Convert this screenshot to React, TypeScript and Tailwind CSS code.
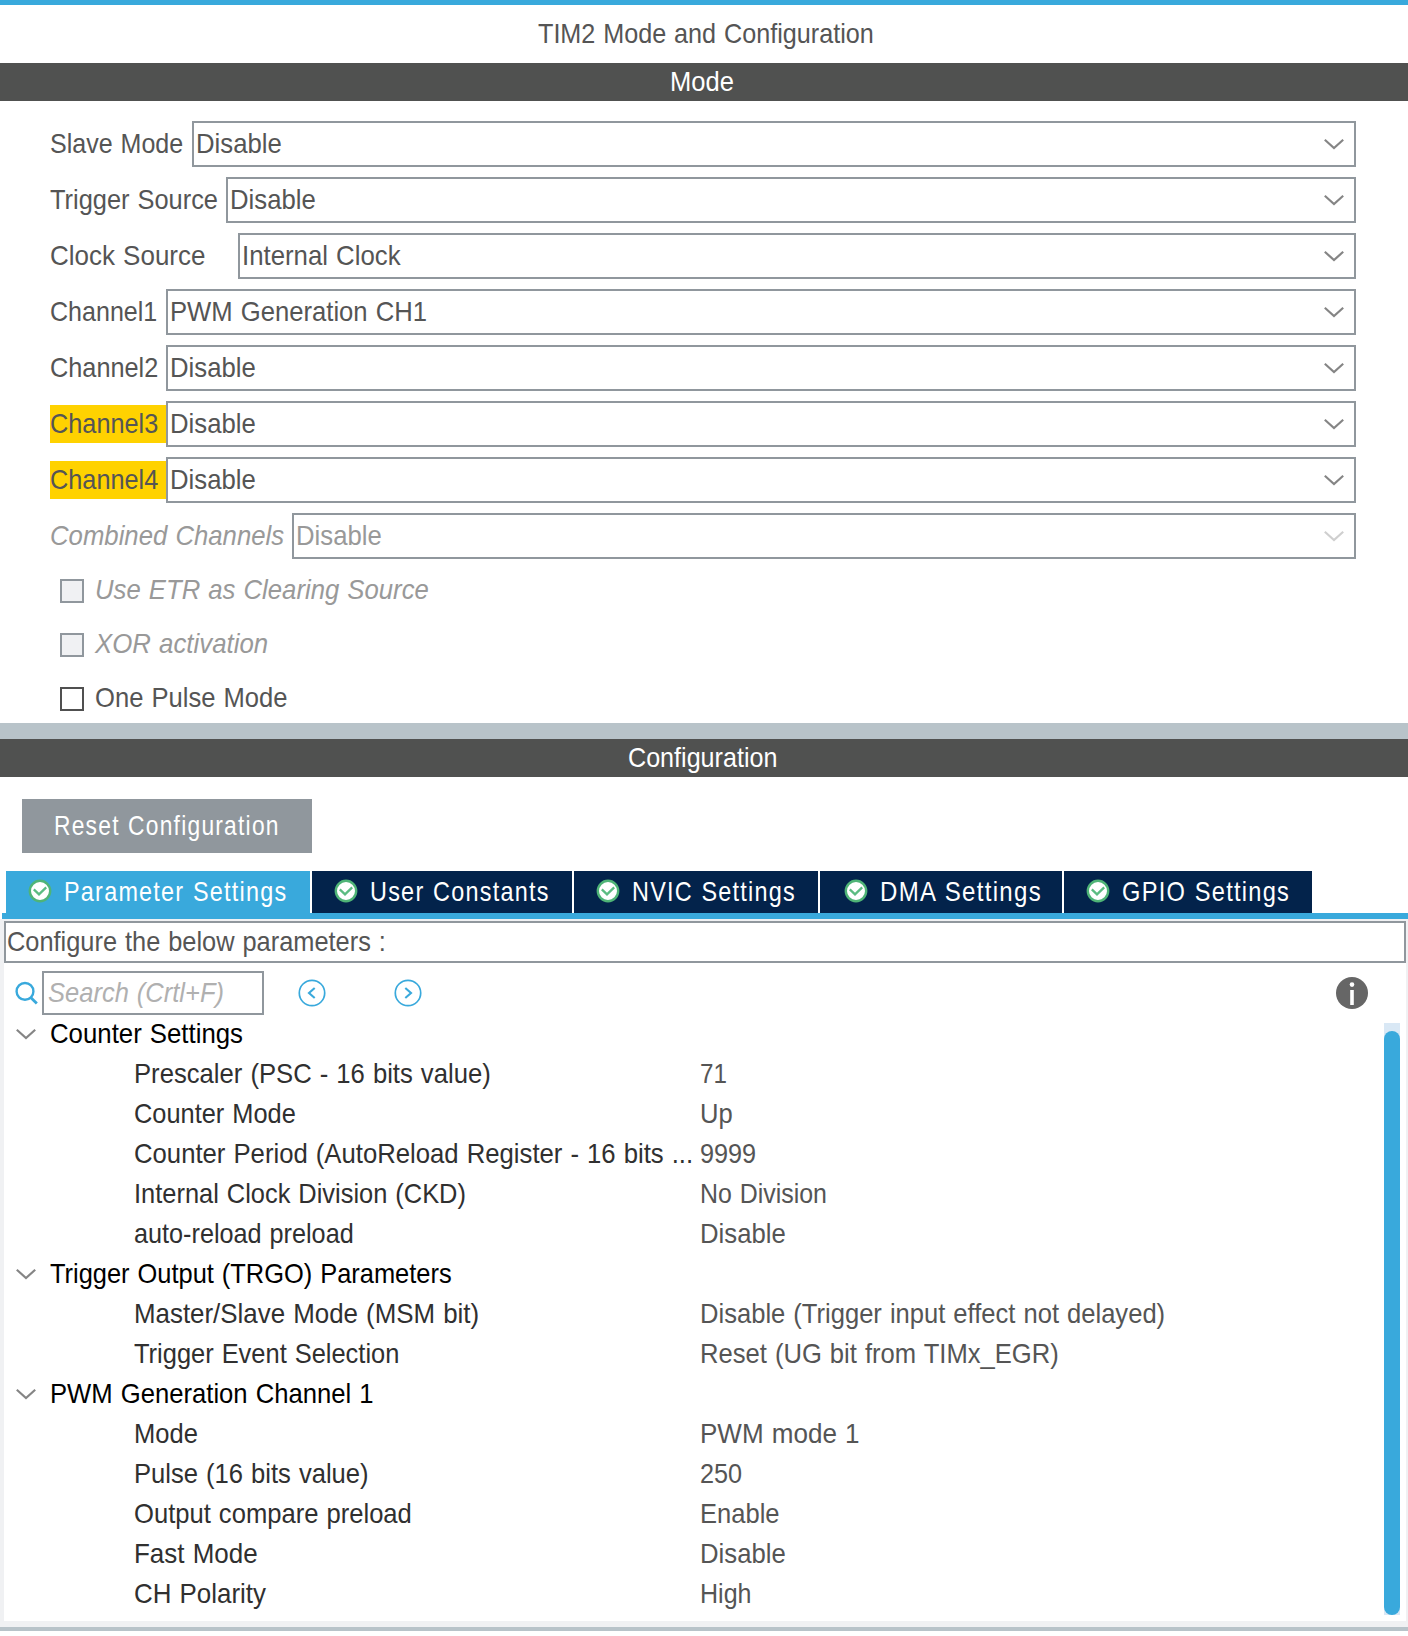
import { useLayoutEffect, useRef, useState } from "react";

type TProps = { children: string; w: number; className?: string };

/* Single-line label condensed horizontally to a given width. */
function T({ children, w, className = "" }: TProps) {
  const ref = useRef<HTMLSpanElement>(null);
  const [scale, setScale] = useState(0.93);
  useLayoutEffect(() => {
    if (ref.current) setScale(w / (ref.current.offsetWidth - 1.5));
  }, [w, children]);
  return (
    <span className={`block shrink-0 ${className}`} style={{ width: w }}>
      <span
        ref={ref}
        className="inline-block origin-left whitespace-pre [word-spacing:1px]"
        style={{ transform: `scaleX(${scale})` }}
      >
        {children}
      </span>
    </span>
  );
}

function Chevron({ className = "" }: { className?: string }) {
  return (
    <svg viewBox="0 0 20 12" fill="none" className={`h-3 w-5 shrink-0 ${className}`}>
      <path d="M0.8 1.8L10 10L19.2 1.8" stroke="currentColor" strokeWidth="2.2" />
    </svg>
  );
}

type Row = {
  label: string;
  lw: number;
  box: string;
  value: string;
  vw: number;
  mark?: boolean;
  off?: boolean;
};

const modeRows: Row[] = [
  { label: "Slave Mode", lw: 132, box: "w-[142px]", value: "Disable", vw: 84 },
  { label: "Trigger Source", lw: 166.5, box: "w-[176px]", value: "Disable", vw: 84 },
  { label: "Clock Source", lw: 154.5, box: "w-[188px]", value: "Internal Clock", vw: 157 },
  { label: "Channel1", lw: 106, box: "w-[116px]", value: "PWM Generation CH1", vw: 256 },
  { label: "Channel2", lw: 107, box: "w-[116px]", value: "Disable", vw: 84 },
  { label: "Channel3", lw: 107, box: "w-[116px]", value: "Disable", vw: 84, mark: true },
  { label: "Channel4", lw: 107, box: "w-[116px]", value: "Disable", vw: 84, mark: true },
  { label: "Combined Channels", lw: 233, box: "w-[242px]", value: "Disable", vw: 84, off: true },
];

const checks = [
  { label: "Use ETR as Clearing Source", w: 332, off: true },
  { label: "XOR activation", w: 172, off: true },
  { label: "One Pulse Mode", w: 191.5, off: false },
];

const tabs = [
  { label: "Parameter Settings", w: 222.5, box: "w-[304px] pl-[22px]", active: true },
  { label: "User Constants", w: 178.5, box: "w-[260px] pl-[22px]", active: false },
  { label: "NVIC Settings", w: 162.5, box: "w-[244px] pl-[22px]", active: false },
  { label: "DMA Settings", w: 161, box: "w-[242px] pl-6", active: false },
  { label: "GPIO Settings", w: 166.5, box: "w-[248px] pl-[22px]", active: false },
];

type Param = [string, number, string, number];
const groups: { title: string; w: number; items: Param[] }[] = [
  {
    title: "Counter Settings",
    w: 192,
    items: [
      ["Prescaler (PSC - 16 bits value)", 355, "71", 25.5],
      ["Counter Mode", 160, "Up", 31.5],
      ["Counter Period (AutoReload Register - 16 bits ...", 557.5, "9999", 54.5],
      ["Internal Clock Division (CKD)", 331, "No Division", 126],
      ["auto-reload preload", 218.5, "Disable", 84],
    ],
  },
  {
    title: "Trigger Output (TRGO) Parameters",
    w: 400,
    items: [
      ["Master/Slave Mode (MSM bit)", 343.5, "Disable (Trigger input effect not delayed)", 463.5],
      ["Trigger Event Selection", 264, "Reset (UG bit from TIMx_EGR)", 357],
    ],
  },
  {
    title: "PWM Generation Channel 1",
    w: 322,
    items: [
      ["Mode", 62.5, "PWM mode 1", 158.5],
      ["Pulse (16 bits value)", 233.5, "250", 41],
      ["Output compare preload", 276.5, "Enable", 78],
      ["Fast Mode", 122, "Disable", 84],
      ["CH Polarity", 131, "High", 50.5],
    ],
  },
];

function CheckBadge() {
  return (
    <svg viewBox="0 0 24 24" fill="none" className="h-6 w-6 shrink-0">
      <circle cx="12" cy="12" r="10.2" fill="#fff" stroke="#4fb477" strokeWidth="2.4" />
      <path d="M5.8 10.4L11 15.4L18.2 8.4" stroke="#5cbc82" strokeWidth="2.3" />
    </svg>
  );
}

function CircleArrow({ flip }: { flip?: boolean }) {
  return (
    <svg viewBox="0 0 28 28" fill="none" stroke="#39a9dc" className="h-7 w-7 shrink-0">
      <circle cx="14" cy="14" r="12.7" strokeWidth="1.7" />
      <path d={flip ? "M11.3 9L17 14L11.3 19" : "M16.7 9L11 14L16.7 19"} strokeWidth="2.1" />
    </svg>
  );
}

export default function App() {
  return (
    <div className="flex h-[1636px] w-[1408px] flex-col overflow-hidden bg-white font-['Liberation_Sans',Arial,sans-serif] text-[28px] leading-[38px] text-[#555555]">
      <div className="h-[5px] shrink-0 bg-[#39a9dc]" />
      <div className="flex h-[58px] shrink-0 pt-[10px] pl-[538px]">
        <T w={334}>TIM2 Mode and Configuration</T>
      </div>
      <div className="flex h-[38px] shrink-0 bg-[#505150] pl-[669.5px] text-white">
        <T w={62.5}>Mode</T>
      </div>

      <div className="flex flex-col gap-[10px] pt-5 pr-[52px] pl-[50px]">
        {modeRows.map((r) => (
          <div key={r.label} className="flex h-[46px] items-center">
            <div
              className={`flex h-[38px] shrink-0 ${r.box} ${r.mark ? "bg-[#ffd200]" : ""} ${
                r.off ? "text-[#999999] italic" : ""
              }`}
            >
              <T w={r.lw}>{r.label}</T>
            </div>
            <div className="flex h-full flex-1 items-center justify-between border-2 border-[#90979d] pr-[10px] pl-[1.5px]">
              <T w={r.vw} className={r.off ? "text-[#999999]" : ""}>
                {r.value}
              </T>
              <Chevron className={r.off ? "text-[#cfcfcf]" : "text-[#858585]"} />
            </div>
          </div>
        ))}
      </div>

      <div className="flex h-[164px] shrink-0 flex-col gap-4 pt-3 pl-[60px]">
        {checks.map((c) => (
          <div key={c.label} className="flex h-[38px] shrink-0">
            <span
              className={`mt-2 h-6 w-6 shrink-0 border-2 ${
                c.off ? "border-[#90979d] bg-[#f0f1f3]" : "border-[#505050] bg-white"
              }`}
            />
            <T w={c.w} className={c.off ? "ml-[10.5px] text-[#999999] italic" : "ml-[10.5px]"}>
              {c.label}
            </T>
          </div>
        ))}
      </div>

      <div className="h-4 shrink-0 bg-[#b8c3c9]" />
      <div className="flex h-[38px] shrink-0 bg-[#505150] pl-[628px] text-white">
        <T w={148.5}>Configuration</T>
      </div>

      <div className="flex h-[94px] shrink-0 pt-[22px] pl-[22px]">
        <button className="flex h-[54px] w-[290px] bg-[#90979d] pt-2 pl-8 text-left tracking-[1.5px] text-white">
          <T w={224.5}>Reset Configuration</T>
        </button>
      </div>

      <div className="flex h-[42px] shrink-0 gap-[2px] pl-[6px] tracking-[1.5px] text-white">
        {tabs.map((t) => (
          <div
            key={t.label}
            className={`flex shrink-0 ${t.box} ${t.active ? "bg-[#39a9dc]" : "bg-[#03234b]"}`}
          >
            <div className="mt-2 h-6">
              <CheckBadge />
            </div>
            <T w={t.w} className="mt-[2px] ml-3">
              {t.label}
            </T>
          </div>
        ))}
      </div>
      <div className="ml-[2px] h-[6px] shrink-0 bg-[#39a9dc]" />

      <div className="flex h-[708px] shrink-0 flex-col bg-[#f0f1f3] pt-[2px] pr-[2px] pb-[6px] pl-1">
        <div className="flex h-[42px] shrink-0 border-2 border-[#90979d] bg-white pl-[0.5px]">
          <T w={377.5}>Configure the below parameters :</T>
        </div>
        <div className="flex min-h-0 flex-1 flex-col bg-white">
          <div className="flex h-[60px] shrink-0 items-center pl-[10px]">
            <svg viewBox="0 0 24 24" fill="none" stroke="#39a9dc" className="h-6 w-6 shrink-0">
              <circle cx="11" cy="10.4" r="8.4" strokeWidth="2.4" />
              <path d="M16.5 16.2L22.8 22.6" strokeWidth="2.8" />
            </svg>
            <div className="ml-1 flex h-11 w-[222px] shrink-0 border-2 border-[#90979d] pt-[1px] pl-1 text-[#b0b0b0] italic">
              <T w={174.5}>Search (Crtl+F)</T>
            </div>
            <div className="ml-[34px] flex gap-[68px]">
              <CircleArrow />
              <CircleArrow flip />
            </div>
            <svg viewBox="0 0 32 32" className="mr-[38px] ml-auto h-8 w-8 shrink-0">
              <circle cx="16" cy="16" r="16" fill="#666666" />
              <circle cx="16" cy="7.6" r="2.3" fill="#fff" />
              <path d="M14.2 13h3.6v15h-3.6z" fill="#fff" />
            </svg>
          </div>
          <div className="-mt-2 flex flex-1 justify-between pr-[6px]">
            <div className="flex flex-col">
              {groups.map((g) => (
                <div key={g.title}>
                  <div className="flex h-10 text-black">
                    <Chevron className="mt-[13px] mr-[14px] ml-3 text-[#858585]" />
                    <T w={g.w}>{g.title}</T>
                  </div>
                  {g.items.map(([name, nw, value, vw]) => (
                    <div key={name} className="flex h-10 pl-[130px]">
                      <div className="w-[566px] shrink-0 text-[#303030]">
                        <T w={nw}>{name}</T>
                      </div>
                      <T w={vw}>{value}</T>
                    </div>
                  ))}
                </div>
              ))}
            </div>
            <div className="mt-2 h-[592px] w-4 bg-[#d9e8f5] pt-2">
              <div className="h-[584px] rounded-lg bg-[#39a9dc]" />
            </div>
          </div>
        </div>
      </div>
      <div className="h-1 shrink-0 bg-[#b8c3c9]" />
    </div>
  );
}
